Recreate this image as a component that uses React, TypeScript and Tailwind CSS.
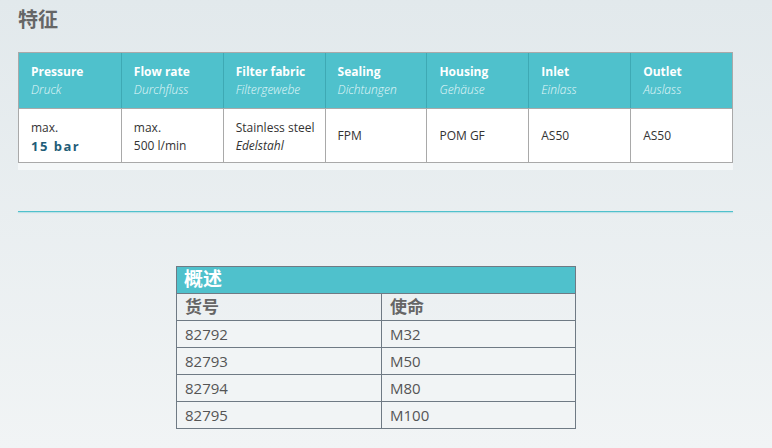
const cols = [
  { en: "Pressure", de: "Druck" },
  { en: "Flow rate", de: "Durchfluss" },
  { en: "Filter fabric", de: "Filtergewebe" },
  { en: "Sealing", de: "Dichtungen" },
  { en: "Housing", de: "Gehäuse" },
  { en: "Inlet", de: "Einlass" },
  { en: "Outlet", de: "Auslass" },
];

const rows = [
  ["82792", "M32"],
  ["82793", "M50"],
  ["82794", "M80"],
  ["82795", "M100"],
];

const cjk = { fontFamily: '"Open Sans", "Noto Sans CJK SC", sans-serif' };

export default function App() {
  return (
    <main
      className="w-[772px] h-[448px] overflow-hidden bg-gradient-to-b from-[#e2e9ec] to-[#f1f4f5] text-[#333]"
      style={cjk}
    >
      <div className="pl-[18px] pr-[39px] pt-[7px]">
        <h2 className="text-[20px] leading-[26px] font-bold text-[#666]">特征</h2>

        {/* spec table */}
        <div className="mt-[19px] bg-[#f4f7f8] pb-[7px]">
          <div className="grid grid-cols-7 border border-[#a9a9a9]">
            {cols.map((c, i) => (
              <div
                key={c.en}
                className={`h-[55px] bg-[#4fc1cc] pl-[12px] pt-[10px] text-[12px] leading-[18px] text-white ${i > 0 ? "border-l border-[#3ea9b4]" : ""}`}
              >
                <div className="font-bold">{c.en}</div>
                <div className="italic font-light text-[#e4f7f9]">{c.de}</div>
              </div>
            ))}
            <div className="h-[54px] bg-white pl-[12px] pt-[10px] text-[12px] leading-[18px] border-t border-[#a9a9a9]">
              <div>max.</div>
              <div className="font-bold text-[#1f5d78] tracking-[1.5px] text-[13px]">15 bar</div>
            </div>
            <div className="h-[54px] bg-white pl-[12px] pt-[10px] text-[12px] leading-[18px] border-t border-l border-[#a9a9a9]">
              <div>max.</div>
              <div>500 l/min</div>
            </div>
            <div className="h-[54px] bg-white pl-[12px] pt-[10px] text-[12px] leading-[18px] border-t border-l border-[#a9a9a9]">
              <div>Stainless steel</div>
              <div className="italic">Edelstahl</div>
            </div>
            {["FPM", "POM GF", "AS50", "AS50"].map((v, i) => (
              <div
                key={i}
                className="h-[54px] bg-white pl-[12px] flex items-center text-[12px] border-t border-l border-[#a9a9a9]"
              >
                {v}
              </div>
            ))}
          </div>
        </div>

        <div className="mt-[41px] h-[1px] bg-[#4fc1cc] shadow-[0_1px_1px_rgba(79,193,204,0.35)]" />
      </div>

      {/* overview table */}
      <div className="ml-[176px] mt-[54px] w-[400px] border border-[#6f7a84]">
        <div className="h-[26px] bg-[#4fc1cc] pl-[7px] text-[19px] leading-[25px] font-bold text-white overflow-hidden">概述</div>
        <div className="grid grid-cols-[204px_1fr] text-[15px] leading-[26px] text-[#555]">
          <div className="pl-[8px] border-t border-[#6f7a84] font-bold text-[#666] text-[17px]">货号</div>
          <div className="pl-[8px] border-t border-l border-[#6f7a84] font-bold text-[#666] text-[17px]">使命</div>
          {rows.map(([a, b]) => (
            <>
              <div key={a} className="pl-[8px] border-t border-[#6f7a84] bg-[#f1f4f5]">{a}</div>
              <div key={b} className="pl-[8px] border-t border-l border-[#6f7a84] bg-[#f1f4f5]">{b}</div>
            </>
          ))}
        </div>
      </div>
    </main>
  );
}
